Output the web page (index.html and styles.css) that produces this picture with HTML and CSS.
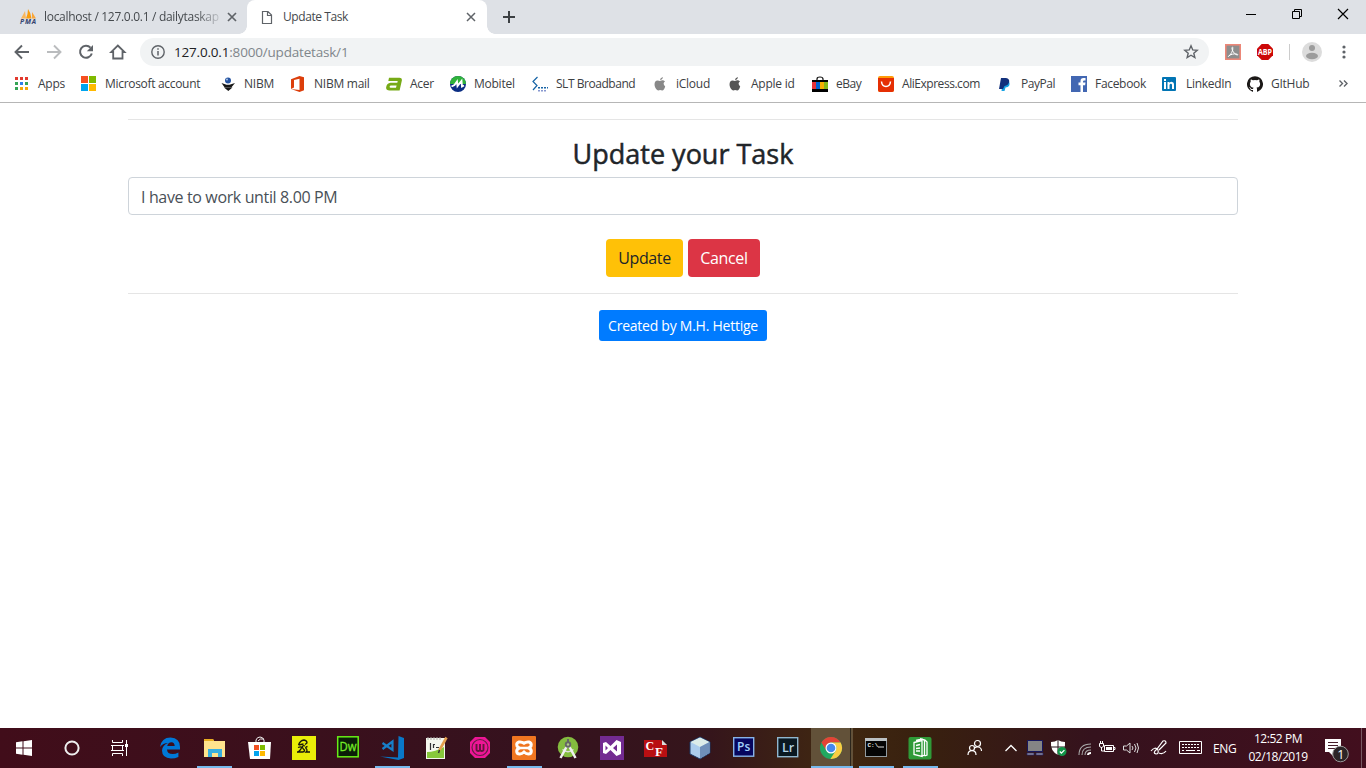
FILE: index.html
```html
<!DOCTYPE html>
<html lang="en">
<head>
<meta charset="utf-8">
<title>Update Task</title>
<link rel="stylesheet" href="styles.css">
</head>
<body>
<div class="screen">
  <header class="tabstrip">
    <div class="tab">
      <svg class="pma" width="18" height="16" viewBox="0 0 18 16"><path d="M2 9.500Q4 6 6 2L7 9.500Z" fill="#f9b65c"/><path d="M7 9.500Q9 5 9 0Q12 4 12.500 9.500Z" fill="#f89c0e"/><path d="M13 9.500V3Q15 6 17 9.500Z" fill="#f9a63a"/><text x="1" y="15" font-size="6.800" font-weight="700" font-style="italic" fill="#33416e" textLength="15.500">PMA</text></svg>
      <span class="tab-title fade">localhost / 127.0.0.1 / dailytaskap</span>
      <svg width="10" height="10" viewBox="0 0 10 10"><path d="M1 1l8 8M9 1l-8 8" stroke="#5f6368" stroke-width="1.7"/></svg>
    </div>
    <div class="tab active">
      <svg class="file" width="12" height="15" viewBox="0 0 12 15"><path d="M1.500 1.500h5.500l3.500 3.500v8.500h-9zM6.500 1.500v4h4" fill="none" stroke="#5f6368" stroke-width="1.200"/></svg>
      <span class="tab-title">Update Task</span>
      <svg width="10" height="10" viewBox="0 0 10 10"><path d="M1 1l8 8M9 1l-8 8" stroke="#5f6368" stroke-width="1.500"/></svg>
    </div>
    <svg class="plus" width="12" height="12" viewBox="0 0 12 12"><path d="M6 0v12M0 6h12" stroke="#3c4043" stroke-width="2"/></svg>
    <div class="winctl">
      <svg width="46" height="28" viewBox="0 0 46 28"><path d="M18 14.500h10" stroke="#000"/></svg>
      <svg width="46" height="28" viewBox="0 0 46 28"><path d="M18.500 11.500h7v7h-7zM20.500 11.500v-2h7v7h-2" fill="none" stroke="#000"/></svg>
      <svg width="46" height="28" viewBox="0 0 46 28"><path d="M18 9l10 10M28 9l-10 10" stroke="#000" stroke-width="1.200"/></svg>
    </div>
  </header>
  <div class="toolbar">
    <svg width="32" height="36" viewBox="0 0 32 36"><path d="M23 18H10M16 11.500L9.500 18l6.500 6.500" fill="none" stroke="#5f6368" stroke-width="1.900"/></svg>
    <svg width="32" height="36" viewBox="0 0 32 36"><path d="M9 18h13M16 11.500l6.500 6.500-6.500 6.500" fill="none" stroke="#babcbe" stroke-width="1.900"/></svg>
    <svg width="32" height="36" viewBox="0 0 32 36"><path d="M20.500 13.700A6 6 0 1 0 21.800 19.500" fill="none" stroke="#5f6368" stroke-width="2"/><path d="M23 11v6.200h-6.200z" fill="#5f6368"/></svg>
    <svg width="32" height="36" viewBox="0 0 32 36"><path d="M15.800 11.500l6.700 6.500h-2v6.500h-9.300v-6.500h-2z" fill="none" stroke="#5f6368" stroke-width="1.800"/></svg>
    <div class="omnibox">
      <svg width="14" height="14" viewBox="0 0 14 14"><circle cx="7" cy="7" r="6.200" fill="none" stroke="#5f6368" stroke-width="1.400"/><path d="M7 6v4.500M7 3.300v1.500" stroke="#5f6368" stroke-width="1.500"/></svg>
      <span class="url"><b>127.0.0.1</b>:8000/updatetask/1</span>
      <svg width="16" height="16" viewBox="0 0 16 16"><path d="M8 1.800l1.750 4.100 4.450.4-3.400 2.900 1.050 4.400L8 11.250 4.150 13.600l1.050-4.400-3.400-2.900 4.450-.4z" fill="none" stroke="#5f6368" stroke-width="1.400"/></svg>
    </div>
    <div class="extensions">
      <svg width="16" height="16" viewBox="0 0 16 16"><rect x=".8" y=".8" width="14.400" height="14.400" fill="#8d8d8d" stroke="#ec8778" stroke-width="1.600"/><path d="M3.300 12.500C6 11 8.300 6 7.800 3.500c-.5-1-1.400 0-.4 2.600 1 2.500 3 4.700 5 4.900 1.500-.4-.8-1.300-3-1.100-2.500.2-5 1-6.100 2.600z" fill="none" stroke="#fff"/></svg>
      <svg width="16" height="16" viewBox="0 0 16 16"><path d="M4.700 0h6.600L16 4.700v6.600L11.300 16H4.700L0 11.300V4.700z" fill="#cc0808"/><text x="1" y="11" font-size="8.300" font-weight="700" fill="#fff" textLength="14" lengthAdjust="spacingAndGlyphs">ABP</text></svg>
      <i class="divider"></i>
      <svg width="20" height="20" viewBox="0 0 20 20"><circle cx="10" cy="10" r="10" fill="#dcdcdc"/><circle cx="10" cy="6" r="3" fill="#9c9c9c"/><ellipse cx="10" cy="14" rx="6" ry="3.300" fill="#9c9c9c"/></svg>
      <svg class="dots" width="4" height="14" viewBox="0 0 4 14"><g fill="#5f6368"><circle cx="2" cy="2" r="1.600"/><circle cx="2" cy="7" r="1.600"/><circle cx="2" cy="12" r="1.600"/></g></svg>
    </div>
  </div>
  <nav class="bookmarks">
    <a><svg viewBox="0 0 16 16"><path d="M1 1h3v3H1zM6 1h3v3H6z" fill="#e23a2e"/><path d="M11 1h3v3h-3z" fill="#e23a2e"/><path d="M1 6h3v3H1zM11 6h3v3h-3zM1 11h3v3H1z" fill="#35a455"/><path d="M6 6h3v3H6z" fill="#2f80ed"/><path d="M6 11h3v3H6zM11 11h3v3h-3z" fill="#f5a70a"/></svg>Apps</a>
    <a><svg viewBox="0 0 16 16"><path d="M0 0h7v7H0z" fill="#f65022"/><path d="M8 0h7v7H8z" fill="#7fba00"/><path d="M0 8h7v7H0z" fill="#00a4ef"/><path d="M8 8h7v7H8z" fill="#ffb900"/></svg><span class="snug">Microsoft account</span></a>
    <a><svg viewBox="0 0 16 16"><circle cx="8" cy="4.500" r="3" fill="#2553a1"/><circle cx="7" cy="3.500" r="1" fill="#a7c3e7"/><path d="M1.500 7l5 1.800h3L15 7l-3.500 4.200h-7zM4 11.500h8.500L8.300 15z" fill="#171717"/></svg>NIBM</a>
    <a><svg viewBox="0 0 16 16"><path d="M1 3.300L9.500 0 14 1.300v13L9.500 16 1 13l8.500 1V2.800L4 4v7.500L1 13z" fill="#dc3e0b"/></svg>NIBM mail</a>
    <a><svg viewBox="0 0 16 16"><path d="M3 1.800h10.500q3 0 2.300 3L13.600 14.500H3.500Q-.4 14.500.2 11q.7-4 4.300-4.300h6.800l.4-1.800H2.300zM5 9.500q-1.200 0-1.400 1.300 0 1 1 1H10l.6-2.300z" fill="#77aa16" fill-rule="evenodd"/></svg>Acer</a>
    <a><svg viewBox="0 0 16 16"><circle cx="8" cy="8" r="8" fill="#0a2d83"/><path d="M0 8a8 8 0 0 1 16 0z" fill="#2fb33a"/><path d="M1.500 10.500l3-1.500L7 5.500 7.500 10l4-5 .5 5.500 2-1" fill="none" stroke="#fff" stroke-width="1.900"/></svg>Mobitel</a>
    <a><svg viewBox="0 0 16 16"><path d="M5.500 1L1 5.500l4 4L1 14" fill="none" stroke="#1764a6" stroke-width="1.200"/><path d="M6 11h2v1.500H6zM9 11h2v1.500H9zM12 11h2v1.500h-2zM15 11h1v1.500h-1z" fill="#1764a6"/><path d="M6 14h2v1.500H6zM9 14h2v1.500H9zM12 14h2v1.500h-2z" fill="#8898d0"/></svg><span class="tight">SLT Broadband</span></a>
    <a><svg viewBox="0 0 16 16" fill="#888"><path d="M10.800 1q.1 2.500-2.800 3.200Q8 1.700 10.800 1zM8 5q3-1.500 5 .4-2.900 2 .2 5-1.200 4-3 4-2.200-1-3.900 0Q3.800 14 2.700 10 2 6.200 4.300 4.800 6 4.200 8 5z"/></svg>iCloud</a>
    <a><svg viewBox="0 0 16 16" fill="#555"><path d="M10.800 1q.1 2.500-2.800 3.200Q8 1.700 10.800 1zM8 5q3-1.500 5 .4-2.900 2 .2 5-1.200 4-3 4-2.200-1-3.900 0Q3.800 14 2.700 10 2 6.200 4.300 4.800 6 4.200 8 5z"/></svg>Apple id</a>
    <a><svg viewBox="0 0 16 16"><path d="M5 5V3q0-2 3-2t3 2v2" fill="none" stroke="#111" stroke-width="1.200"/><path d="M0 4h16v12H0z" fill="#000"/><path d="M0 6h4v7H0z" fill="#e53238"/><path d="M4 6h4v7H4z" fill="#0064d2"/><path d="M8 6h4v7H8z" fill="#f5af02"/><path d="M12 6h4v7h-4z" fill="#86b817"/></svg><span class="tight">eBay</span></a>
    <a><svg viewBox="0 0 16 16"><rect width="16" height="16" rx="2" fill="#ff9b08"/><path d="M0 2h16v12q0 2-2 2H2q-2 0-2-2z" fill="#e52f04"/><path d="M3.500 5.500q.5 5 4.500 5t4.500-5" fill="none" stroke="#fff" stroke-width="1.500"/></svg><span class="tight">AliExpress.com</span></a>
    <a><svg viewBox="0 0 16 16"><path d="M6 5h6q2 6-3.500 6.500l-1 3.500H4.500z" fill="#16a2e3"/><path d="M4 2h5q4 .5 3 4.500-1 3-4.500 3.500l-1.500 3H2z" fill="#13317c"/></svg><span class="tight">PayPal</span></a>
    <a><svg viewBox="0 0 16 16"><path d="M0 0h16v16H0z" fill="#4267b2"/><path d="M9.500 16V9.200H7.500V6.600h2V5q0-3 3-3h2v2.400h-1.300q-1.200 0-1.200 1.300v.9h2.500L14.100 9.200H12V16z" fill="#fff"/></svg><span class="snug">Facebook</span></a>
    <a><svg viewBox="0 0 16 16"><rect x="0" y="1" width="14" height="14" rx="1" fill="#0275b4"/><path d="M2 6h2v7H2zM2 3h2v2H2zM5.500 6h2v1q1-1.300 2.500-1.100Q12 6 12 9v4h-2V9q0-1.300-1.100-1.300T7.500 9v4h-2z" fill="#fff"/></svg><span class="snug">LinkedIn</span></a>
    <a><svg viewBox="0 0 16 16"><path d="M8 .2a8 8 0 0 0-2.530 15.600c.4.070.550-.170.550-.380v-1.500c-2.230.480-2.700-.950-2.700-.950-.360-.930-.890-1.170-.890-1.170-.730-.5.050-.5.050-.5.810.060 1.230.830 1.230.830.720 1.230 1.880.87 2.340.670.070-.520.280-.87.510-1.070-1.780-.2-3.640-.89-3.640-3.950 0-.88.310-1.590.820-2.150-.080-.2-.360-1.020.080-2.120 0 0 .670-.210 2.200.820a7.600 7.600 0 0 1 4 0c1.530-1.040 2.200-.820 2.200-.820.440 1.100.160 1.920.080 2.120.510.560.820 1.270.820 2.150 0 3.070-1.870 3.750-3.650 3.950.290.250.540.730.540 1.480v2.190c0 .210.150.460.550.380A8 8 0 0 0 8 .2z" fill="#1b1817"/></svg>GItHub</a>
    <svg class="more" viewBox="0 0 11 9"><path d="M1.500 1.500l3 3-3 3M6 1.500l3 3-3 3" fill="none" stroke="#5f6368" stroke-width="1.400"/></svg>
  </nav>
  <main class="page">
    <hr>
    <h3>Update your Task</h3>
    <input class="field" type="text" value="I have to work until 8.00 PM">
    <div class="actions"><button class="btn warning">Update</button><button class="btn danger">Cancel</button></div>
    <hr>
    <div class="credit"><button class="btn primary">Created by M.H. Hettige</button></div>
  </main>
  <footer class="taskbar">
    <div class="sys">
      <svg viewBox="0 0 24 24"><path d="M4 6.300l6.500-1v6.200H4zM11.500 5.200L20 4v7.500h-8.500zM4 12.500h6.500v6.200L4 17.800zM11.500 12.500H20V20l-8.500-1.200z" fill="#fff"/></svg>
      <svg viewBox="0 0 24 24"><circle cx="12" cy="12" r="6.600" fill="none" stroke="#eee" stroke-width="2"/></svg>
      <svg viewBox="0 0 24 24"><path d="M4.500 4v2.500h10V4M4.500 20v-2.500h10V20M4.500 9.500h10v5h-10zM18.500 4v16M3 9.500h13M3 14.500h13" fill="none" stroke="#fff"/><path d="M17 8h3v3h-3z" fill="#fff"/></svg>
    </div>
    <div class="apps">
      <i><svg viewBox="0 0 24 24"><path d="M2 11Q3.500 1.500 12.500 1.500 22 2 22 11v2.500H9q.2 4.500 5.700 4.500 3 0 5.700-1.500V21Q17 22.500 13 22.500 4 22 4 14.500q.4-5.500 6-7.500Q5 7 2 11zM9.200 10h7.500Q16.500 6.500 13.500 6.200 10 6.500 9.200 10z" fill="#0078d7"/></svg></i>
      <i class="run"><svg viewBox="0 0 24 24"><path d="M1 3h9l1 2h11v16H1z" fill="#ffe38d"/><path d="M1 3h9l1 2H1z" fill="#e8ad20"/><path d="M5 21v-8h14v8h-4v-4H9v4z" fill="#38afe0"/></svg></i>
      <i><svg viewBox="0 0 24 24"><path d="M8 7V4q1-3 4-3t4 3v3M10 5q2-3 6-2" fill="none" stroke="#eee"/><path d="M0 6h23l-1 17H2z" fill="#fff"/><path d="M6 9h5v5H6z" fill="#f25022"/><path d="M12 9h5v5h-5z" fill="#7fba00"/><path d="M6 15h5v5H6z" fill="#00a4ef"/><path d="M12 15h5v5h-5z" fill="#ffb900"/></svg></i>
      <i><svg viewBox="0 0 24 24"><path d="M0 0h24v24H0z" fill="#e9ed08"/><path d="M6.500 9Q8 4.500 12 4q3 .5 3 3l-2 1.500M6.500 9l5-1M6 11.500q2-1 3.500-.5 0 2.500-4 5.500M13 10q-3-1-2.500 1.500.5 1.500 2 2.500 0 2-2 2H5M15.500 10.500q-2.500.5-1.500 2 2 1.500 0 3.500h4" fill="none" stroke="#15150d" stroke-width="1.300"/></svg></i>
      <i><svg viewBox="0 0 24 24"><rect x="1.700" y=".8" width="20.500" height="20" fill="#0b1e08" stroke="#67ee16" stroke-width="1.500"/><text x="3.500" y="15" font-size="12.500" fill="#75ec27" stroke="#75ec27" stroke-width=".3" textLength="17" lengthAdjust="spacingAndGlyphs">Dw</text></svg></i>
      <i class="run"><svg viewBox="0 0 24 24"><path d="M18.500 0L24 2v20l-5.500 2L0 20.500l18 1z" fill="#0978c9"/><path d="M2.500 7l10 7V5.500L2.500 13" fill="none" stroke="#187fc9" stroke-width="2.200"/></svg></i>
      <i><svg viewBox="0 0 24 24"><path d="M2 2h19v21H2z" fill="#f5f8ee"/><path d="M3 16q8 0 17-5v11H3z" fill="#87c83b"/><path d="M4 1v3M7 1v3M10 1v3M13 1v3M16 1v3" stroke="#aaa"/><path d="M6.500 7v7M9.500 12V8.500h1.500M12 11.500h3" fill="none" stroke="#333" stroke-width="1.200"/><path d="M22.500 1.500L15.500 14" stroke="#e4a04e" stroke-width="2.600"/><path d="M15.500 14l-1 3" stroke="#333" stroke-width="1.500"/></svg></i>
      <i><svg viewBox="0 0 24 24"><path d="M7 1h10l5 5v11l-5 5H7l-5-5V6z" fill="#ee1596"/><circle cx="12" cy="11.500" r="8" fill="none" stroke="#652043" stroke-width="1.200"/><path d="M8.500 8v5.500q0 1.500 1.800 1.500t1.700-1.500V8v5.500q0 1.500 1.800 1.500t1.700-1.500V8" fill="none" stroke="#63163c" stroke-width="1.900"/></svg></i>
      <i class="run"><svg viewBox="0 0 24 24"><rect width="24" height="24" rx="1" fill="#f07621"/><path d="M12 7.200Q9.500 5.500 7 6q-3 1-2 4 .7 1.500 2.500 2-2.500.8-2.800 3 0 3 3 3 2.300-.2 4.300-2 2 1.800 4.300 2 3 0 3-3-.3-2.200-2.800-3 1.800-.5 2.500-2 1-3-2-4-2.500-.5-5 1.200z" fill="none" stroke="#fff" stroke-width="3"/><path d="M9 12h6" stroke="#fff" stroke-width="2.500"/></svg></i>
      <i><svg viewBox="0 0 24 24"><circle cx="12" cy="11" r="10.300" fill="#84bb3f"/><path d="M6.500 13.500q5.500 4.500 11 0" fill="none" stroke="#ddd" stroke-width="1.500"/><path d="M11.500 9L4.500 22M12.500 9L19.500 22" fill="none" stroke="#f0f0f0" stroke-width="2.500"/><path d="M11 3h2v4h-2z" fill="#666"/><circle cx="12" cy="8.500" r="3.200" fill="#666"/><circle cx="12" cy="8.500" r="1.200" fill="#b3ce87"/></svg></i>
      <i><svg viewBox="0 0 24 24"><path d="M0 0h24v24H0z" fill="#732b91"/><path d="M3 7l3-1 4.500 4 6-6L21 6v12l-4.500 2-6-6L6 18l-3-1zM5.500 9.500v5L8 12zM13 12l4 3.500v-7z" fill="#fff" fill-rule="evenodd"/></svg></i>
      <i><svg viewBox="0 0 24 24"><path d="M0 4h17l6 5v12H0z" fill="#b90f12"/><path d="M18 4l5 5h-5z" fill="#ddd"/><text class="serif" x="1.500" y="14" font-size="12" font-weight="700" fill="#fff">C</text><text class="serif" x="11" y="19.500" font-size="13" font-weight="700" fill="#fff">F</text></svg></i>
      <i><svg viewBox="0 0 24 24"><path d="M2 6l10-5 10 5v11l-10 6L2 18z" fill="#accded" stroke="#1d3865"/><path d="M2.500 6L12 1.500 21.500 6 12 11z" fill="#dcece9"/><path d="M12 11l9.500-5v11L12 22.500z" fill="#6f8fb9"/></svg></i>
      <i><svg viewBox="0 0 24 24"><rect x="1.700" y="1.700" width="20" height="18.500" fill="#06065e" stroke="#87b3e8" stroke-width="1.400"/><text x="5" y="15" font-size="12" font-weight="600" fill="#a2d1fa">Ps</text></svg></i>
      <i><svg viewBox="0 0 24 24"><rect x="1.700" y="1.700" width="20" height="19" fill="#0a1821" stroke="#90b7cf" stroke-width="1.400"/><text x="6" y="15.500" font-size="12.500" font-weight="600" fill="#b5d5e5">Lr</text></svg></i>
      <i class="run chrome"><svg viewBox="0 0 24 24"><circle cx="12" cy="12" r="11" fill="#20a861"/><path d="M2.400 6.600a11 11 0 0 1 19.200 0H12a5.400 5.400 0 0 0-4.700 8.100z" fill="#e34336"/><path d="M21.600 6.600A11 11 0 0 1 11.400 23l5.300-8.300A5.400 5.400 0 0 0 12 6.600z" fill="#fbcd43"/><circle cx="12" cy="12" r="5.500" fill="#fff"/><circle cx="12" cy="12" r="4.300" fill="#4688ed"/></svg></i>
      <i class="run"><svg viewBox="0 0 24 24"><rect x="1.500" y="2.500" width="21" height="18" fill="#050505" stroke="#929ba0"/><path d="M1 2h22v3H1z" fill="#bbc1c4"/><text class="mono" x="3.500" y="11" font-size="6" font-weight="700" fill="#eee">C:\</text><path d="M14 11h6" stroke="#ddd"/></svg></i>
      <i class="run"><svg viewBox="0 0 24 24"><rect x=".5" y="1" width="23" height="22.500" rx="2" fill="#2f9a38"/><path d="M6 6.500l8-2v16l-8-2zM8 4.500l6-1.500 2.500 1.500V19l-2 1M12 2.500l5 1.500 2 2v13l-2.500 1M8 9.500l4-1M8 12.500l4-.5M8 15h4" fill="none" stroke="#fff" stroke-width="1.300"/></svg></i>
    </div>
    <svg class="people" viewBox="0 0 18 18"><g fill="none" stroke="#fff" stroke-width="1.200"><circle cx="11.500" cy="4.500" r="3"/><circle cx="6" cy="9" r="2.500"/><path d="M2 16q0-4.300 4-4.300T10 16M8.500 9q2-1.500 3.500-1 3.500.5 3.500 4"/></g></svg>
    <div class="tray">
      <svg viewBox="0 0 18 18"><path d="M3.500 12L9 6.500l5.500 5.500" fill="none" stroke="#fff" stroke-width="1.300"/></svg>
      <svg viewBox="0 0 18 18"><path d="M1.500 1.500h15v11h-15z" fill="#858585" stroke="#17175d"/><path d="M1 14h7v2H1zM10 14h7v2h-7z" fill="#9999a5" stroke="#24246c" stroke-width=".7"/></svg>
      <svg viewBox="0 0 18 18"><path d="M8 1q3 2 7 2 1 9-7 13Q0 12 1 3q4 0 7-2z" fill="#fff"/><path d="M8 1v15M1 8h14" stroke="#26151b"/><circle cx="12" cy="12.500" r="4.500" fill="#129447"/><path d="M9.800 12.500l1.600 1.600 3-3" stroke="#fff" fill="none" stroke-width="1.300"/></svg>
      <svg viewBox="0 0 18 18"><g fill="none" stroke="#aaa" stroke-width="1.100"><path d="M3 16Q3 5 15 5M6 16q0-8 9-8M9 16q0-5 6-5"/><path d="M12 16q0-2 3-2" stroke="#fff" stroke-width="2"/></g></svg>
      <svg viewBox="0 0 18 18"><path d="M6.500 6.500h9v6h-9zM16 8.500h1v2h-1M1.500 4.500h4v3q-2 2-4 0zM2.500 4.500V2M4.500 4.500V2M3.500 8v4h3" fill="none" stroke="#fff"/><path d="M8 8h6v3H8z" fill="#fff"/></svg>
      <svg viewBox="0 0 18 18"><path d="M1.500 7h3L8 4v10l-3.500-3h-3zM10 7q2 2 0 4M12.500 5q3 4 0 8M15 4q3 5 0 10" fill="none" stroke="#ddd"/></svg>
      <svg viewBox="0 0 18 18"><path d="M1 12q4-5 7-1 1 4-2 4-4-1 1-5l6-8q3-1 3 2L9 11M9 14q4 2 7-2" fill="none" stroke="#fff" stroke-width="1.200"/></svg>
      <svg class="keys" viewBox="0 0 24 18"><path d="M.5 2.500h22v12H.5z" fill="none" stroke="#fff"/><path d="M3 5.500h18M3 8.500h18" stroke="#fff" stroke-dasharray="2 1"/><path d="M3 11.500h2M7 11.500h9M18 11.500h3" stroke="#fff"/></svg>
      <span class="lang">ENG</span>
      <div class="clock"><span>12:52 PM</span><span>02/18/2019</span></div>
      <svg class="note" viewBox="0 0 26 26"><path d="M1 2h16v13H9v4l-4-4H1z" fill="#fff"/><path d="M4 5.500h10M4 8.500h10M4 11.500h7" stroke="#48202c"/><circle cx="16.500" cy="17" r="7.800" fill="#2c2527" stroke="#999"/><text x="13.300" y="21.500" font-size="12.500" fill="#fff">1</text></svg>
      <i class="peek"></i>
    </div>
  </footer>
</div>
</body>
</html>
```

FILE: styles.css
```css
* { box-sizing: border-box; }
body { margin: 0; background: #fff; font-family: "Open Sans", "Noto Sans", sans-serif; }
svg { display: block; flex: none; }
i { font-style: normal; }
.screen { width: 1366px; height: 768px; display: flex; flex-direction: column; overflow: hidden; }

.tabstrip { height: 34px; flex: none; background: #dee1e6; display: flex; }
.tab { height: 34px; width: 247px; display: flex; align-items: center; font-size: 12px; letter-spacing: -.42px; color: #45494d; padding: 0 10px 0 19px; }
.tab-title { width: 176px; margin-left: 7px; margin-right: 7px; white-space: nowrap; flex: none; line-height: 18px; }
.fade { mask-image: linear-gradient(90deg, #000 86%, rgba(0, 0, 0, .15)); letter-spacing: -.3px; }
.tab.active { width: 240px; background: #fff; border-radius: 8px 8px 0 0; padding-left: 14px; position: relative; }
.active .tab-title { margin-left: 10px; width: 176px; }
.tab.active::before, .tab.active::after { content: ""; position: absolute; bottom: 0; width: 8px; height: 8px; }
.tab.active::before { left: -8px; background: radial-gradient(circle at 0 0, transparent 7.5px, #fff 8px); }
.tab.active::after { right: -8px; background: radial-gradient(circle at 100% 0, transparent 7.5px, #fff 8px); }
.plus { margin: 11px 0 0 16px; }
.winctl { display: flex; margin-left: auto; }

.toolbar { height: 36px; flex: none; display: flex; align-items: center; padding-left: 6px; }
.omnibox { width: 1069px; height: 28px; margin-left: 6px; border-radius: 14px; background: #f1f3f4; display: flex; align-items: center; padding: 0 10px 0 11px; }
.url { flex: 1; margin-left: 9px; padding-bottom: 1px; font-size: 13.5px; letter-spacing: -.19px; color: #80868b; }
.url b { font-weight: 400; color: #202124; }
.extensions { display: flex; align-items: center; margin-left: 16px; }
.extensions svg + svg { margin-left: 16px; }
.divider { width: 1px; height: 16px; background: #ccc; margin: 0 12px 0 16px; }
.extensions .dots { margin-left: 20px; }

.bookmarks { height: 33px; flex: none; border-bottom: 1px solid #b6b6b6; padding: 0 0 5px 14px; display: grid; align-items: center; grid-template-columns: 67px 139px 70px 96px 64px 82px 120px 75px 85px 66px 119px 74px 91px 85px 91px 11px; }
.bookmarks a { display: flex; align-items: center; gap: 8px; white-space: nowrap; font-size: 12px; letter-spacing: -.25px; color: #3c4043; }
.bookmarks svg { width: 16px; height: 16px; }
.bookmarks .more { width: 11px; height: 9px; }
.snug { letter-spacing: -.31px; }
.tight { letter-spacing: -.46px; }

.page { flex: 1; width: 1110px; margin: 0 auto; color: #212529; }
.page hr { margin: 16px 0; border: 0; border-top: 1px solid #e5e5e5; }
h3 { margin: 0 0 7px; height: 34px; text-align: center; font-size: 27px; line-height: 35px; font-weight: 500; -webkit-text-stroke: .5px #212529; }
.field { display: block; width: 100%; height: 38px; padding: 7px 12px 6px; border: 1px solid #ced4da; border-radius: 4px; background: #fff; color: #495057; font: 16px "Open Sans", sans-serif; letter-spacing: -.36px; }
.actions { margin-top: 24px; display: flex; justify-content: center; gap: 5px; }
.btn { border: 0; border-radius: 4px; height: 38px; padding: 0; color: #fff; font: 16px "Open Sans", sans-serif; letter-spacing: -.36px; }
.warning { background: #ffc107; color: #212529; width: 77px; }
.danger { background: #dc3545; width: 72px; }
.credit { display: flex; justify-content: center; }
.primary { background: #007bff; width: 168px; height: 31px; font-size: 14px; letter-spacing: -.25px; border-radius: 3px; }

.taskbar { height: 40px; flex: none; display: flex; color: #fff; background: linear-gradient(90deg, #410d1a, #35121e 40%, #35151b 52%, #402811 61%, #38200f 68%, #35121d 80%, #420f1e); }
.sys { display: flex; width: 147px; align-items: center; gap: 24px; padding-left: 12px; }
.sys svg, .apps svg { width: 24px; height: 24px; }
.apps { display: grid; grid-template-columns: repeat(3, 45px) repeat(15, 44px); }
.apps i { display: grid; place-items: center; }
.run { background: linear-gradient(#76b9ed, #76b9ed) center bottom / 35px 2px no-repeat; }
.apps .chrome { background: linear-gradient(#76b9ed, #76b9ed) left 1px bottom / 42px 2px no-repeat, linear-gradient(90deg, transparent 1px, #625139 1px 40px, #2b251b 40px 41px, #625139 41px 43px, transparent 43px); }
.chrome svg { margin-right: 2px; }
.people { width: 18px; height: 18px; align-self: center; margin-left: 24px; }
.tray { display: flex; flex: 1; align-items: center; margin-left: 18px; }
.tray svg { width: 18px; height: 18px; margin-right: 6px; }
.tray svg:nth-child(4) { margin-left: 2px; margin-right: 4px; }
.tray svg:nth-child(6) { margin-right: 10px; margin-left: 0; }
.tray .keys { width: 24px; margin-left: 5px; margin-right: 10px; }
.lang { font-size: 12px; letter-spacing: -.3px; width: 24px; }
.clock { display: flex; flex-direction: column; align-items: center; width: 62px; margin-left: 10px; font-size: 12px; line-height: 18px; letter-spacing: -.45px; white-space: nowrap; }
.tray .note { width: 26px; height: 26px; margin: 4px 0 0 15px; }
.peek { width: 1px; height: 40px; margin: 0 4px 0 auto; background: #775861; }
text { font-family: "Open Sans", sans-serif; }
.serif { font-family: "Liberation Serif", serif; }
.mono { font-family: "Liberation Mono", monospace; }
```
